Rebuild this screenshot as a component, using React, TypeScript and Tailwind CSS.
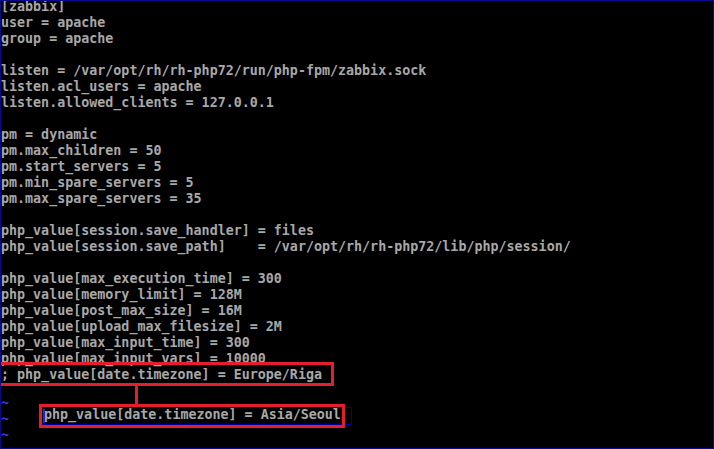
import React from "react";

const lines: string[] = [
  "[zabbix]",
  "user = apache",
  "group = apache",
  "",
  "listen = /var/opt/rh/rh-php72/run/php-fpm/zabbix.sock",
  "listen.acl_users = apache",
  "listen.allowed_clients = 127.0.0.1",
  "",
  "pm = dynamic",
  "pm.max_children = 50",
  "pm.start_servers = 5",
  "pm.min_spare_servers = 5",
  "pm.max_spare_servers = 35",
  "",
  "php_value[session.save_handler] = files",
  "php_value[session.save_path]    = /var/opt/rh/rh-php72/lib/php/session/",
  "",
  "php_value[max_execution_time] = 300",
  "php_value[memory_limit] = 128M",
  "php_value[post_max_size] = 16M",
  "php_value[upload_max_filesize] = 2M",
  "php_value[max_input_time] = 300",
  "php_value[max_input_vars] = 10000",
  "; php_value[date.timezone] = Europe/Riga",
];

export default function App() {
  return (
    <div className="relative w-[714px] h-[449px] overflow-hidden bg-black border border-[#0a0a90] box-border">
      <div
        className="mt-[-2px] flex flex-col text-[13.33px] leading-[16px] font-bold text-[#a8a8a8]"
        style={{ fontFamily: '"DejaVu Sans Mono", "Liberation Mono", monospace' }}
      >
        {lines.map((l, i) => (
          <div key={i} className="h-[16px] whitespace-pre">
            {l}
          </div>
        ))}
        <div className="mt-[12px] flex flex-col text-[#3434f0]">
          <div className="h-[16px] whitespace-pre">~</div>
          <div className="h-[16px] flex whitespace-pre">
            <span className="w-[43px]">~</span>
            <span className="relative -top-[4px] text-[#a8a8a8]">
              php_value[date.timezone] = Asia/Seoul
            </span>
          </div>
          <div className="h-[16px] whitespace-pre">~</div>
        </div>
      </div>

      {/* blue selection outline */}
      <div className="absolute left-[42px] top-[406px] w-[309px] h-[18px] border border-[#0000a0]" />
      {/* cursor */}
      <div className="absolute left-[42px] top-[408px] w-[2px] h-[14px] bg-[#2020ff]" />

      {/* red annotation boxes */}
      <div className="absolute -left-[3px] top-[361px] w-[336px] h-[24px] border-[3px] border-[#e31e2d]" />
      <div className="absolute left-[134px] top-[385px] w-[3px] h-[18px] bg-[#e31e2d]" />
      <div className="absolute left-[38px] top-[403px] w-[306px] h-[24px] border-[3px] border-[#e31e2d]" />
    </div>
  );
}
